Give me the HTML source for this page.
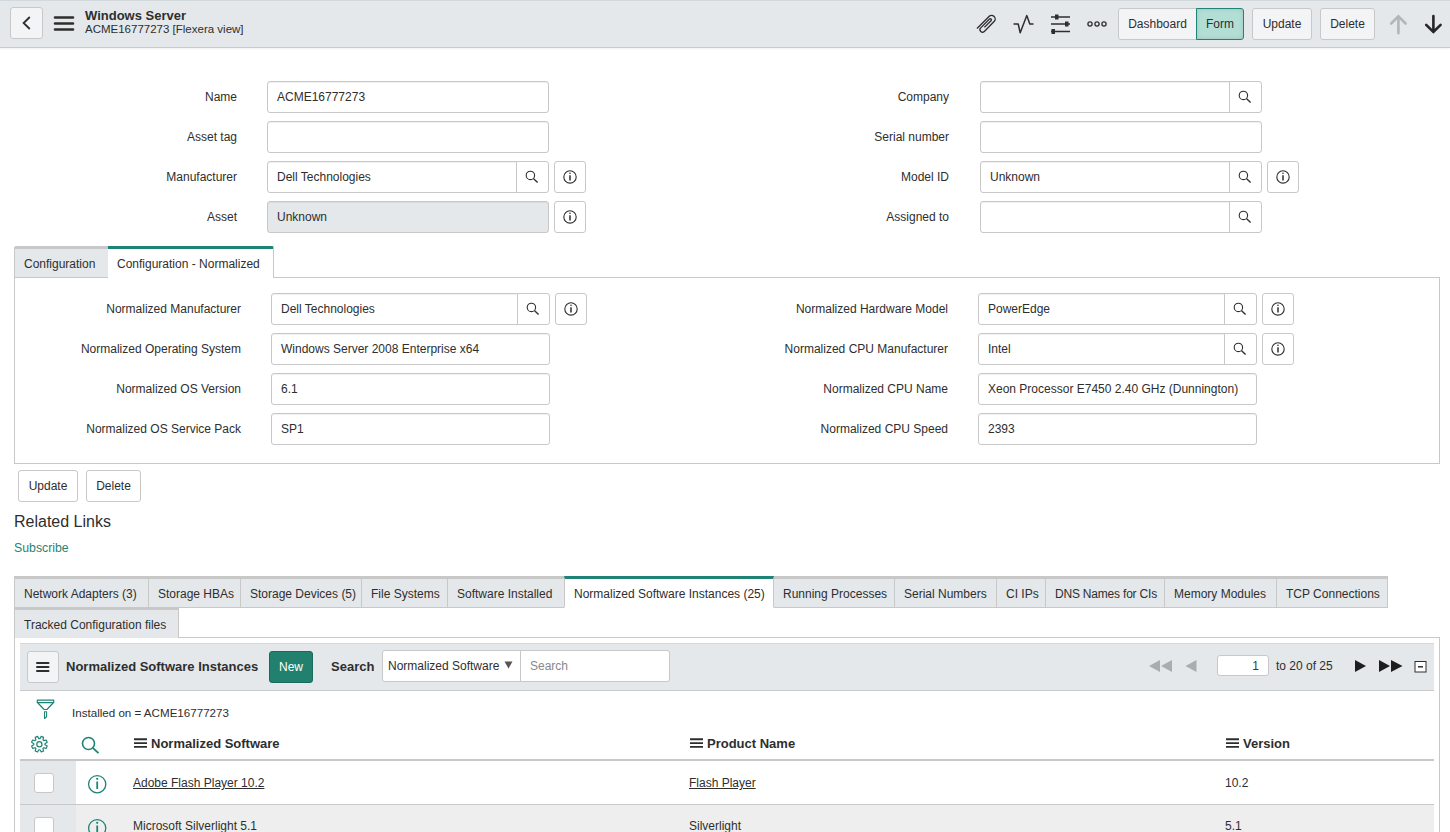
<!DOCTYPE html>
<html><head><meta charset="utf-8">
<style>
*{box-sizing:border-box;margin:0;padding:0}
html,body{width:1450px;height:832px;overflow:hidden;background:#fff;font-family:"Liberation Sans",sans-serif;font-size:12px;color:#2e2e2e}
.a{position:absolute}
#hdr{position:absolute;left:0;top:0;width:1450px;height:48px;background:#e4e8eb;border-top:1px solid #d3d8dc;border-bottom:1px solid #c8cacc;box-shadow:0 1px 2px rgba(0,0,0,.06)}
.btn{position:absolute;height:32px;border:1px solid #c8c8c8;border-radius:3px;background:#f3f4f5;line-height:30px;text-align:center;color:#2e2e2e;font-size:12px}
.lbl{position:absolute;text-align:right;white-space:nowrap;line-height:32px;height:32px;font-size:12px;color:#2e2e2e}
.inp{position:absolute;height:32px;border:1px solid #c8c8c8;border-radius:3px;background:#fff;box-shadow:inset 0 1px 1px rgba(0,0,0,.06);line-height:30px;padding-left:9px;white-space:nowrap;font-size:12px;color:#2e2e2e}
.ro{background:#e4e8eb}
.sb{position:absolute;height:32px;border:1px solid #c8c8c8;border-radius:0 3px 3px 0;background:#fff}
.ib{position:absolute;height:32px;width:32px;border:1px solid #c8c8c8;border-radius:3px;background:#fff}
.rt{position:absolute;top:576px;height:32px;background:#e4e8eb;border-top:3px solid #c8c8c8;border-left:1px solid #c8c8c8;border-right:1px solid #c8c8c8;border-bottom:1px solid #c8c8c8;line-height:27px;padding-left:9px;padding-top:2px;white-space:nowrap;font-size:12px;color:#2e2e2e}
.rt.act{background:#fff;border-top-color:#1f8476;border-bottom-color:#fff;z-index:2}
.th{top:736px;font-size:13px;font-weight:bold;color:#2e2e2e;white-space:nowrap}
.td{font-size:12px;color:#2e2e2e;white-space:nowrap}
.cb{left:34px;width:20px;height:20px;background:#fff;border:1px solid #c8c8c8;border-radius:3px}
svg{position:absolute;overflow:visible}
</style></head><body>

<svg width="0" height="0" style="position:absolute"><defs>
<symbol id="srch" viewBox="0 0 32 32"><circle cx="14.4" cy="14.4" r="4.2" fill="none" stroke="#2e2e2e" stroke-width="1.1"/><path d="M17.6 17.7 L21.6 21.5" stroke="#2e2e2e" stroke-width="1.4"/></symbol>
<symbol id="info" viewBox="0 0 32 32"><circle cx="16" cy="15.9" r="6.2" fill="none" stroke="#2e2e2e" stroke-width="1.1"/><path d="M16 14.2 V19.6" stroke="#2e2e2e" stroke-width="1.5"/><circle cx="16" cy="12.3" r="0.8" fill="#2e2e2e"/></symbol>
</defs></svg>
<div id="hdr"></div>
<div class="btn" style="left:10px;top:7px;width:33px;height:32px"></div>
<svg style="left:0;top:0" width="1" height="1"><path d="M29.8 17 L23.6 23 L29.8 29" fill="none" stroke="#2e2e2e" stroke-width="1.8"/>
<path d="M55 17.5 H73 M55 23.5 H73 M55 29.5 H73" stroke="#2e2e2e" stroke-width="2.6" stroke-linecap="round"/></svg>
<div class="a" style="left:85px;top:8px;font-size:13px;font-weight:bold;color:#2e2e2e">Windows Server</div>
<div class="a" style="left:85px;top:23px;font-size:11.5px;color:#2e2e2e">ACME16777273 [Flexera view]</div>


<!-- header right icons -->
<svg style="left:0;top:0" width="1" height="1">
<path d="M0 0 L17 0 A3.6 3.6 0 0 1 17 7.2 L3.1 7.2 A2.5 2.5 0 0 1 3.1 2.2 L15.5 2.2 A1.1 1.1 0 0 1 15.5 4.4 L6 4.4" fill="none" stroke="#2e2e2e" stroke-width="1.35" transform="translate(977,28.5) matrix(0.7071,-0.7071,0.7071,0.7071,0,0)"/>
<path d="M1013.5 24 H1018.2 L1020.2 32.8 L1026.8 15.6 L1029.8 24 H1033.5" fill="none" stroke="#2e2e2e" stroke-width="1.5" stroke-linejoin="round"/>
<path d="M1051 17 H1070 M1051 24 H1070 M1051 31.5 H1070" stroke="#2e2e2e" stroke-width="1.5"/>
<rect x="1055" y="14.5" width="3.5" height="5" fill="#2e2e2e"/>
<rect x="1065" y="21.5" width="3.5" height="5" fill="#2e2e2e"/>
<rect x="1051.5" y="29" width="3.5" height="5" fill="#2e2e2e"/>
<circle cx="1090" cy="24" r="2.1" fill="none" stroke="#2e2e2e" stroke-width="1.3"/>
<circle cx="1097" cy="24" r="2.1" fill="none" stroke="#2e2e2e" stroke-width="1.3"/>
<circle cx="1104" cy="24" r="2.1" fill="none" stroke="#2e2e2e" stroke-width="1.3"/>
<path d="M1398.4 33.2 V16.5 M1391.2 23.5 L1398.4 16.3 L1405.6 23.5" fill="none" stroke="#b3b6b8" stroke-width="2.6" stroke-linecap="round" stroke-linejoin="miter"/>
<path d="M1433.4 16 V32 M1426.2 24.8 L1433.4 32 L1440.6 24.8" fill="none" stroke="#262626" stroke-width="2.6" stroke-linecap="round" stroke-linejoin="miter"/>
</svg>
<div class="btn" style="left:1118px;top:8px;width:79px;border-radius:3px 0 0 3px">Dashboard</div>
<div class="btn" style="left:1196px;top:8px;width:48px;border-radius:0 3px 3px 0;background:#b3ded5;border-color:#1f8476;box-shadow:inset 0 0 4px rgba(0,0,0,.12)">Form</div>
<div class="btn" style="left:1252px;top:8px;width:60px">Update</div>
<div class="btn" style="left:1320px;top:8px;width:55px">Delete</div>

<!-- top form -->
<div class="lbl" style="left:0;width:237px;top:81px">Name</div>
<div class="inp" style="left:267px;top:81px;width:282px">ACME16777273</div>
<div class="lbl" style="left:0;width:237px;top:121px">Asset tag</div>
<div class="inp" style="left:267px;top:121px;width:282px"></div>
<div class="lbl" style="left:0;width:237px;top:161px">Manufacturer</div>
<div class="inp" style="left:267px;top:161px;width:250px;border-radius:3px 0 0 3px">Dell Technologies</div>
<div class="sb" style="left:516px;top:161px;width:33px"><svg style="left:-1px;top:-1px" width="32" height="32"><use href="#srch"/></svg></div>
<div class="ib" style="left:554px;top:161px"><svg style="left:-1px;top:-1px" width="32" height="32"><use href="#info"/></svg></div>
<div class="lbl" style="left:0;width:237px;top:201px">Asset</div>
<div class="inp ro" style="left:267px;top:201px;width:282px">Unknown</div>
<div class="ib" style="left:554px;top:201px"><svg style="left:-1px;top:-1px" width="32" height="32"><use href="#info"/></svg></div>

<div class="lbl" style="left:700px;width:249px;top:81px">Company</div>
<div class="inp" style="left:980px;top:81px;width:250px;border-radius:3px 0 0 3px"></div>
<div class="sb" style="left:1229px;top:81px;width:33px"><svg style="left:-1px;top:-1px" width="32" height="32"><use href="#srch"/></svg></div>
<div class="lbl" style="left:700px;width:249px;top:121px">Serial number</div>
<div class="inp" style="left:980px;top:121px;width:282px"></div>
<div class="lbl" style="left:700px;width:249px;top:161px">Model ID</div>
<div class="inp" style="left:980px;top:161px;width:250px;border-radius:3px 0 0 3px">Unknown</div>
<div class="sb" style="left:1229px;top:161px;width:33px"><svg style="left:-1px;top:-1px" width="32" height="32"><use href="#srch"/></svg></div>
<div class="ib" style="left:1267px;top:161px"><svg style="left:-1px;top:-1px" width="32" height="32"><use href="#info"/></svg></div>
<div class="lbl" style="left:700px;width:249px;top:201px">Assigned to</div>
<div class="inp" style="left:980px;top:201px;width:250px;border-radius:3px 0 0 3px"></div>
<div class="sb" style="left:1229px;top:201px;width:33px"><svg style="left:-1px;top:-1px" width="32" height="32"><use href="#srch"/></svg></div>

<!-- section tabs -->
<div class="a" style="left:14px;top:246px;width:95px;height:32px;background:#e4e8eb;border-top:3px solid #c8c8c8;border-left:1px solid #c8c8c8;border-right:1px solid #c8c8c8;border-bottom:1px solid #c8c8c8;border-radius:2px 0 0 0;line-height:27px;padding-left:9px;padding-top:2px">Configuration</div>
<div class="a" style="left:108px;top:246px;width:166px;height:32px;background:#fff;border-top:3px solid #1f8476;border-right:1px solid #c8c8c8;border-radius:0 2px 0 0;line-height:27px;padding-left:9px;padding-top:2px;z-index:2">Configuration - Normalized</div>
<div class="a" style="left:14px;top:277px;width:1426px;height:187px;border:1px solid #c8c8c8"></div>

<div class="lbl" style="left:0;width:241px;top:293px">Normalized Manufacturer</div>
<div class="inp" style="left:271px;top:293px;width:247px;border-radius:3px 0 0 3px">Dell Technologies</div>
<div class="sb" style="left:517px;top:293px;width:33px"><svg style="left:-1px;top:-1px" width="32" height="32"><use href="#srch"/></svg></div>
<div class="ib" style="left:555px;top:293px"><svg style="left:-1px;top:-1px" width="32" height="32"><use href="#info"/></svg></div>
<div class="lbl" style="left:0;width:241px;top:333px">Normalized Operating System</div>
<div class="inp" style="left:271px;top:333px;width:279px">Windows Server 2008 Enterprise x64</div>
<div class="lbl" style="left:0;width:241px;top:373px">Normalized OS Version</div>
<div class="inp" style="left:271px;top:373px;width:279px">6.1</div>
<div class="lbl" style="left:0;width:241px;top:413px">Normalized OS Service Pack</div>
<div class="inp" style="left:271px;top:413px;width:279px">SP1</div>

<div class="lbl" style="left:600px;width:348px;top:293px">Normalized Hardware Model</div>
<div class="inp" style="left:978px;top:293px;width:247px;border-radius:3px 0 0 3px">PowerEdge</div>
<div class="sb" style="left:1224px;top:293px;width:33px"><svg style="left:-1px;top:-1px" width="32" height="32"><use href="#srch"/></svg></div>
<div class="ib" style="left:1262px;top:293px"><svg style="left:-1px;top:-1px" width="32" height="32"><use href="#info"/></svg></div>
<div class="lbl" style="left:600px;width:348px;top:333px">Normalized CPU Manufacturer</div>
<div class="inp" style="left:978px;top:333px;width:247px;border-radius:3px 0 0 3px">Intel</div>
<div class="sb" style="left:1224px;top:333px;width:33px"><svg style="left:-1px;top:-1px" width="32" height="32"><use href="#srch"/></svg></div>
<div class="ib" style="left:1262px;top:333px"><svg style="left:-1px;top:-1px" width="32" height="32"><use href="#info"/></svg></div>
<div class="lbl" style="left:600px;width:348px;top:373px">Normalized CPU Name</div>
<div class="inp" style="left:978px;top:373px;width:279px">Xeon Processor E7450 2.40 GHz (Dunnington)</div>
<div class="lbl" style="left:600px;width:348px;top:413px">Normalized CPU Speed</div>
<div class="inp" style="left:978px;top:413px;width:279px">2393</div>

<div class="btn" style="left:18px;top:470px;width:60px;background:#fff">Update</div>
<div class="btn" style="left:86px;top:470px;width:55px;background:#fff">Delete</div>

<div class="a" style="left:14px;top:513px;font-size:16px;color:#2e2e2e">Related Links</div>
<div class="a" style="left:14px;top:541px;font-size:12.3px;color:#1f8476">Subscribe</div>

<!-- related list tabs -->
<div class="a" style="left:14px;top:637px;width:1426px;height:200px;border:1px solid #c8c8c8;border-bottom:none"></div>
<div class="rt" style="left:14px;width:135px">Network Adapters (3)</div>
<div class="rt" style="left:148px;width:93px">Storage HBAs</div>
<div class="rt" style="left:240px;width:122px">Storage Devices (5)</div>
<div class="rt" style="left:361px;width:87px">File Systems</div>
<div class="rt" style="left:447px;width:118px">Software Installed</div>
<div class="rt act" style="left:564px;width:210px">Normalized Software Instances (25)</div>
<div class="rt" style="left:773px;width:122px">Running Processes</div>
<div class="rt" style="left:894px;width:103px">Serial Numbers</div>
<div class="rt" style="left:996px;width:50px">CI IPs</div>
<div class="rt" style="left:1045px;width:120px;letter-spacing:-0.2px">DNS Names for CIs</div>
<div class="rt" style="left:1164px;width:113px">Memory Modules</div>
<div class="rt" style="left:1276px;width:112px">TCP Connections</div>
<div class="rt" style="left:14px;top:607px;width:165px;height:31px;border-bottom:none;border-top-width:3px;z-index:3">Tracked Configuration files</div>

<!-- list toolbar -->
<div class="a" style="left:20px;top:643px;width:1414px;height:48px;background:#e4e8eb;border-top:1px solid #d6d9dc;border-bottom:1px solid #c8cacc"></div>
<div class="btn" style="left:27px;top:651px;width:32px;height:32px"></div>
<svg style="left:0;top:0" width="1" height="1"><path d="M37 663 H48.5 M37 667 H48.5 M37 671 H48.5" stroke="#2e2e2e" stroke-width="2" stroke-linecap="round"/></svg>
<div class="a" style="left:66px;top:659px;font-size:13px;font-weight:bold;color:#2e2e2e;white-space:nowrap">Normalized Software Instances</div>
<div class="a" style="left:269px;top:651px;width:44px;height:32px;background:#22806f;border:1px solid #1b6b5d;border-radius:3px;color:#fff;line-height:30px;text-align:center;font-size:12px">New</div>
<div class="a" style="left:331px;top:659px;font-size:13px;font-weight:bold;color:#2e2e2e">Search</div>
<div class="a" style="left:382px;top:650px;width:288px;height:32px;background:#fff;border:1px solid #c8c8c8;border-radius:3px"></div>
<div class="a" style="left:520px;top:651px;width:1px;height:30px;background:#c8c8c8"></div>
<div class="a" style="left:388px;top:650px;line-height:32px;font-size:12px;color:#2e2e2e;white-space:nowrap">Normalized Software</div>
<svg style="left:0;top:0" width="1" height="1"><path d="M504.5 661.5 H512.5 L508.5 668.5 Z" fill="#555"/></svg>
<div class="a" style="left:530px;top:650px;line-height:32px;font-size:12px;color:#888">Search</div>

<svg style="left:0;top:0" width="1" height="1">
<path d="M1160 660 V672 L1149 666 Z M1172 660 V672 L1161 666 Z" fill="#a9adb0"/>
<path d="M1196.5 660 V672 L1185.5 666 Z" fill="#a9adb0"/>
<path d="M1355 660 V672 L1366 666 Z" fill="#1e1e1e"/>
<path d="M1379 660 V672 L1390 666 Z M1391 660 V672 L1402.5 666 Z" fill="#1e1e1e"/>
<rect x="1415" y="661.5" width="11" height="10.5" fill="#fff" stroke="#2e2e2e" stroke-width="1"/>
<path d="M1418 666.8 H1423" stroke="#2e2e2e" stroke-width="1.5"/>
</svg>
<div class="a" style="left:1217px;top:655px;width:52px;height:21px;background:#fff;border:1px solid #c8c8c8;border-radius:3px;text-align:right;padding-right:9px;line-height:21px;font-size:12px;color:#2e3d49">1</div>
<div class="a" style="left:1276px;top:659px;font-size:12px;color:#2e2e2e;white-space:nowrap">to 20 of 25</div>

<!-- filter row -->
<svg style="left:0;top:0" width="1" height="1">
<path d="M37.3 700.1 H53.7 V702.7 H37.3 Z" fill="none" stroke="#1f8476" stroke-width="1.2" stroke-linejoin="round"/>
<path d="M37.9 703 L44.1 709.5 H46.9 L53.1 703" fill="none" stroke="#1f8476" stroke-width="1.2" stroke-linejoin="round"/>
<path d="M44.5 711.7 H46.6 V716.8 L44.5 718.5 Z" fill="none" stroke="#1f8476" stroke-width="1.1" stroke-linejoin="round"/>
</svg>
<div class="a" style="left:72px;top:706px;font-size:11.6px;color:#2e2e2e;white-space:nowrap">Installed on = ACME16777273</div>

<!-- column headers -->
<svg style="left:0;top:0" width="1" height="1">
<path d="M39.94 738.63 L41.27 736.42 L43.58 737.38 L42.96 739.88 L43.72 740.64 L46.22 740.02 L47.18 742.33 L44.97 743.66 L44.97 744.74 L47.18 746.07 L46.22 748.38 L43.72 747.76 L42.96 748.52 L43.58 751.02 L41.27 751.98 L39.94 749.77 L38.86 749.77 L37.53 751.98 L35.22 751.02 L35.84 748.52 L35.08 747.76 L32.58 748.38 L31.62 746.07 L33.83 744.74 L33.83 743.66 L31.62 742.33 L32.58 740.02 L35.08 740.64 L35.84 739.88 L35.22 737.38 L37.53 736.42 L38.86 738.63 Z" fill="none" stroke="#1f8476" stroke-width="1.2" stroke-linejoin="round"/>
<circle cx="39.4" cy="744.2" r="2.6" fill="none" stroke="#1f8476" stroke-width="1.2"/>
<circle cx="88.5" cy="743.5" r="6" fill="none" stroke="#1f8476" stroke-width="1.6"/>
<path d="M92.8 747.8 L98.5 753.2" stroke="#1f8476" stroke-width="1.8"/>
<path d="M134 739.3 H147 M134 743.1 H147 M134 746.9 H147" stroke="#2e2e2e" stroke-width="1.9"/>
<path d="M690 739.3 H703 M690 743.1 H703 M690 746.9 H703" stroke="#2e2e2e" stroke-width="1.9"/>
<path d="M1226 739.3 H1239 M1226 743.1 H1239 M1226 746.9 H1239" stroke="#2e2e2e" stroke-width="1.9"/>
</svg>
<div class="a th" style="left:151px">Normalized Software</div>
<div class="a th" style="left:707px">Product Name</div>
<div class="a th" style="left:1243px">Version</div>
<div class="a" style="left:20px;top:759px;width:1414px;height:2px;background:#c8c8c8"></div>

<!-- rows -->
<div class="a" style="left:20px;top:761px;width:56px;height:43px;background:#e4e8eb"></div>
<div class="a" style="left:20px;top:804px;width:1414px;height:1px;background:#c8c8c8"></div>
<div class="a" style="left:20px;top:805px;width:1414px;height:30px;background:#eeeeee"></div>
<div class="a" style="left:20px;top:805px;width:56px;height:30px;background:#e4e8eb"></div>
<div class="a cb" style="top:773px"></div>
<div class="a cb" style="top:817px"></div>
<svg style="left:0;top:0" width="1" height="1">
<circle cx="97.2" cy="784.2" r="8.6" fill="none" stroke="#1f8476" stroke-width="1.3"/>
<path d="M97.2 781.5 V789" stroke="#1f8476" stroke-width="1.8"/>
<circle cx="97.2" cy="778.8" r="1.1" fill="#1f8476"/>
<circle cx="97.2" cy="828.2" r="8.6" fill="none" stroke="#1f8476" stroke-width="1.3"/>
<path d="M97.2 825.5 V833" stroke="#1f8476" stroke-width="1.8"/>
<circle cx="97.2" cy="822.8" r="1.1" fill="#1f8476"/>
</svg>
<div class="a td" style="left:133px;top:776px;text-decoration:underline">Adobe Flash Player 10.2</div>
<div class="a td" style="left:689px;top:776px;text-decoration:underline">Flash Player</div>
<div class="a td" style="left:1225px;top:776px">10.2</div>
<div class="a td" style="left:133px;top:819px">Microsoft Silverlight 5.1</div>
<div class="a td" style="left:689px;top:819px">Silverlight</div>
<div class="a td" style="left:1225px;top:819px">5.1</div>
</body></html>
